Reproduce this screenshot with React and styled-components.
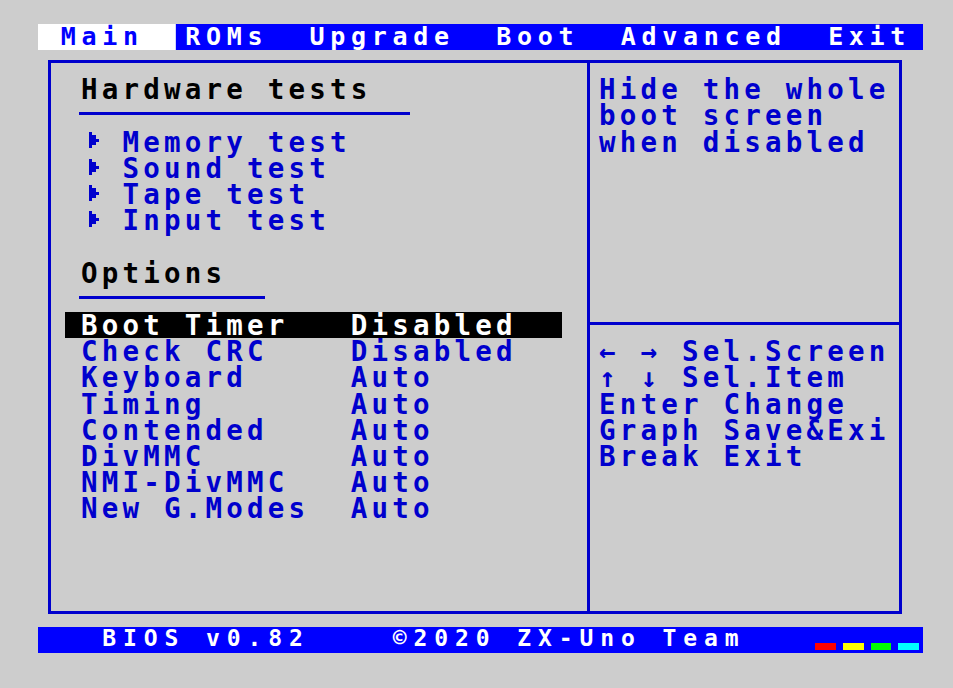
import React from "react";
import styled, { createGlobalStyle, css } from "styled-components";

const PX = 885 / 256;
const PY = 629 / 192;
const x = (n) => `${(n * PX).toFixed(2)}px`;
const y = (n) => `${(n * PY).toFixed(2)}px`;
const NUDGE = 2.5;

const BLUE = "#0000cd";
const BRIGHT = "#0000ff";
const PAPER = "#cdcdcd";

const GlobalStyle = createGlobalStyle`
  html, body { margin: 0; padding: 0; background: ${PAPER}; }
  body { font-family: "DejaVu Sans Mono", "Liberation Mono", monospace; }
`;

const Screen = styled.div`
  margin: 24px 0 0 37.5px;
  width: ${x(256)};
  height: ${y(192)};
  display: flex;
  flex-direction: column;
  font-family: "DejaVu Sans Mono", "Liberation Mono", monospace;
  font-weight: bold;
  font-size: 27.5px;
  letter-spacing: ${(6 * PX - 0.602 * 27.5).toFixed(2)}px;
  line-height: ${y(8)};
  white-space: pre;
`;

const MenuBar = styled.div`
  height: ${y(8)};
  flex-shrink: 0;
  display: flex;
  background: ${BRIGHT};
  color: #fff;
  font-size: 25px;
  letter-spacing: ${(6 * PX - 0.602 * 25).toFixed(2)}px;
`;

const MenuItem = styled.span`
  padding: 0 ${(6 * PX - NUDGE).toFixed(2)}px 0 ${(6 * PX + NUDGE).toFixed(2)}px;
  ${(p) =>
    p.$active &&
    css`
      background: #fff;
      color: ${BRIGHT};
      box-shadow: ${x(4)} 0 0 #fff;
    `}
`;

const Body = styled.div`
  flex: 1;
  padding: ${y(3)} 0 0 ${x(3)};
`;

const Box = styled.div`
  box-sizing: border-box;
  width: ${x(247)};
  height: ${y(169)};
  border-style: solid;
  border-color: ${BLUE};
  border-width: ${y(1)} ${x(1)};
  display: flex;
`;

const LeftPanel = styled.div`
  box-sizing: border-box;
  width: ${x(155)};
  padding: ${y(4)} 0 0 ${x(8)};
  display: flex;
  flex-direction: column;
  align-items: flex-start;
`;

const Heading = styled.div`
  height: ${y(8)};
  padding-left: ${NUDGE}px;
  color: #000;
`;

const Rule = styled.div`
  height: ${y(1)};
  width: ${(p) => x(p.$w)};
  background: ${BLUE};
  margin: ${y(3)} 0 ${y(4)} 0;
`;

const TestList = styled.div`
  margin-bottom: ${y(8)};
`;

const TestItem = styled.div`
  display: flex;
  height: ${y(8)};
  color: ${BLUE};
`;

const TestLabel = styled.span`
  padding-left: ${NUDGE}px;
`;

const ArrowCell = styled.span`
  width: ${x(12)};
  display: flex;
  align-items: flex-start;
  padding-top: ${y(1.2)};
  box-sizing: border-box;
  svg {
    margin-left: ${x(3)};
  }
`;

const OptionRow = styled.div`
  display: flex;
  height: ${y(8)};
  width: ${x(144)};
  margin-left: ${x(-4)};
  padding-left: ${(4 * PX + NUDGE).toFixed(2)}px;
  box-sizing: border-box;
  color: ${(p) => (p.$selected ? "#fff" : BLUE)};
  background: ${(p) => (p.$selected ? "#000" : "transparent")};
`;

const OptionLabel = styled.span`
  width: ${x(78)};
`;

const RightPanel = styled.div`
  flex: 1;
  border-left: ${x(1)} solid ${BLUE};
  display: flex;
  flex-direction: column;
  color: ${BLUE};
`;

const HelpTop = styled.div`
  box-sizing: border-box;
  height: ${y(80)};
  padding: ${y(4)} 0 0 ${(2 * PX + NUDGE).toFixed(2)}px;
  border-bottom: ${y(1)} solid ${BLUE};
`;

const HelpBottom = styled.div`
  padding: ${y(4)} 0 0 ${(2 * PX + NUDGE).toFixed(2)}px;
`;

const Line = styled.div`
  height: ${y(8)};
`;

const BottomBar = styled.div`
  box-sizing: border-box;
  height: ${y(8)};
  flex-shrink: 0;
  background: ${BRIGHT};
  color: #fff;
  display: flex;
  align-items: flex-end;
  padding: 0 ${x(1)} ${y(1)} ${(18 * PX + NUDGE).toFixed(2)}px;
`;

const BottomText = styled.span`
  align-self: flex-start;
  font-size: 23px;
  letter-spacing: ${(6 * PX - 0.602 * 23).toFixed(2)}px;
  line-height: 23.2px;
`;

const Swatches = styled.div`
  margin-left: auto;
  display: flex;
  gap: ${x(2)};
`;

const Swatch = styled.span`
  width: ${x(6)};
  height: ${y(2)};
  background: ${(p) => p.$c};
`;

const Triangle = () => (
  <svg
    width={3 * PX}
    height={5 * PY}
    viewBox="0 0 3 5"
    preserveAspectRatio="none"
    shapeRendering="crispEdges"
  >
    <rect x="0" y="0" width="1" height="5" fill={BLUE} />
    <rect x="1" y="1" width="1" height="3" fill={BLUE} />
    <rect x="2" y="2" width="1" height="1" fill={BLUE} />
  </svg>
);

const menu = ["Main", "ROMs", "Upgrade", "Boot", "Advanced", "Exit"];
const tests = ["Memory test", "Sound test", "Tape test", "Input test"];
const options = [
  ["Boot Timer", "Disabled"],
  ["Check CRC", "Disabled"],
  ["Keyboard", "Auto"],
  ["Timing", "Auto"],
  ["Contended", "Auto"],
  ["DivMMC", "Auto"],
  ["NMI-DivMMC", "Auto"],
  ["New G.Modes", "Auto"],
];
const help = ["Hide the whole", "boot screen", "when disabled"];
const keys = [
  "\u2190 \u2192 Sel.Screen",
  "\u2191 \u2193 Sel.Item",
  "Enter Change",
  "Graph Save&Exi",
  "Break Exit",
];
const swatches = ["#ff0000", "#ffff00", "#00ff00", "#00ffff"];

export default function App() {
  return (
    <>
      <GlobalStyle />
      <Screen>
        <MenuBar>
          {menu.map((m, i) => (
            <MenuItem key={m} $active={i === 0}>
              {m}
            </MenuItem>
          ))}
        </MenuBar>
        <Body>
          <Box>
            <LeftPanel>
              <Heading>Hardware tests</Heading>
              <Rule $w={96} />
              <TestList>
                {tests.map((t) => (
                  <TestItem key={t}>
                    <ArrowCell>
                      <Triangle />
                    </ArrowCell>
                    <TestLabel>{t}</TestLabel>
                  </TestItem>
                ))}
              </TestList>
              <Heading>Options</Heading>
              <Rule $w={54} />
              {options.map(([label, value], i) => (
                <OptionRow key={label} $selected={i === 0}>
                  <OptionLabel>{label}</OptionLabel>
                  <span>{value}</span>
                </OptionRow>
              ))}
            </LeftPanel>
            <RightPanel>
              <HelpTop>
                {help.map((h) => (
                  <Line key={h}>{h}</Line>
                ))}
              </HelpTop>
              <HelpBottom>
                {keys.map((k) => (
                  <Line key={k}>{k}</Line>
                ))}
              </HelpBottom>
            </RightPanel>
          </Box>
        </Body>
        <BottomBar>
          <BottomText>{"BIOS v0.82    \u00a92020 ZX-Uno Team"}</BottomText>
          <Swatches>
            {swatches.map((c) => (
              <Swatch key={c} $c={c} />
            ))}
          </Swatches>
        </BottomBar>
      </Screen>
    </>
  );
}
